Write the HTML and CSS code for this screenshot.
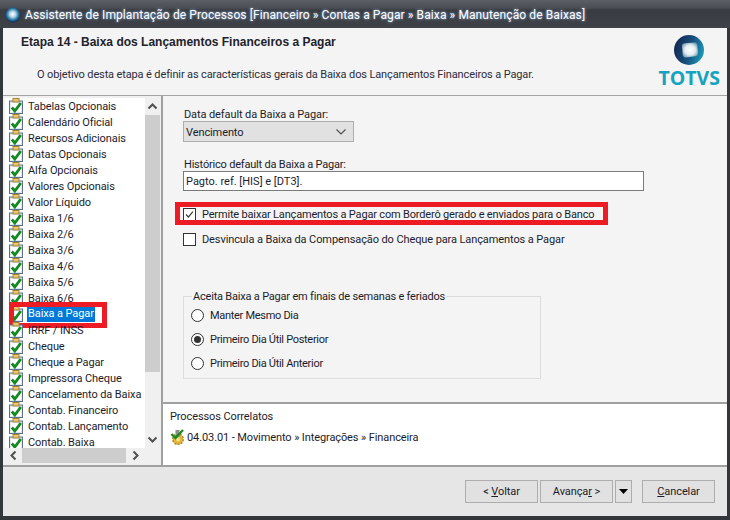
FILE: index.html
```html
<!DOCTYPE html>
<html lang="pt">
<head>
<meta charset="utf-8">
<title>Assistente de Implantação de Processos</title>
<link rel="stylesheet" href="styles.css">
</head>
<body>
<svg class="defs" width="0" height="0">
  <defs>
    <symbol id="ck" viewBox="0 0 16 16">
      <rect x="1.5" y="3" width="13" height="12.5" fill="#dfeaf5" stroke="#5b6f8a"/>
      <rect x="3" y="5" width="10" height="9" fill="#fff"/>
      <rect x="5" y="0.5" width="6" height="3.5" fill="#e9c46a" stroke="#a5853a"/>
      <path d="M3.8 9.5 L6.8 13 L12.8 5" fill="none" stroke="#118a1e" stroke-width="2.8"/>
    </symbol>
    <radialGradient id="ball" cx="0.48" cy="0.45" r="0.55">
      <stop offset="0" stop-color="#ffffff"/>
      <stop offset="0.35" stop-color="#b5d6e6"/>
      <stop offset="0.7" stop-color="#2a78a5"/>
      <stop offset="1" stop-color="#10244f"/>
    </radialGradient>
    <radialGradient id="glow" cx="0.5" cy="0.5" r="0.55">
      <stop offset="0" stop-color="#ffffff"/>
      <stop offset="0.6" stop-color="#e4edf2"/>
      <stop offset="1" stop-color="#7fa5bb"/>
    </radialGradient>
    <linearGradient id="orb" x1="0" y1="0.3" x2="1" y2="0.6">
      <stop offset="0" stop-color="#12284f"/>
      <stop offset="0.55" stop-color="#18507f"/>
      <stop offset="1" stop-color="#1b9cb8"/>
    </linearGradient>
  </defs>
</svg>
<div class="window">
  <div class="titlebar">
    <svg class="appicon" width="16" height="16" viewBox="0 0 16 16"><circle cx="8" cy="8" r="7.5" fill="url(#ball)"/></svg>
    <span class="titletext">Assistente de Implantação de Processos [Financeiro » Contas a Pagar » Baixa » Manutenção de Baixas]</span>
  </div>
  <div class="client">
    <header class="head">
      <div class="headtext">
        <h1 class="step">Etapa 14 - Baixa dos Lançamentos Financeiros a Pagar</h1>
        <p class="goal">O objetivo desta etapa é definir as características gerais da Baixa dos Lançamentos Financeiros a Pagar.</p>
      </div>
      <div class="logo">
        <svg width="30" height="30" viewBox="0 0 30 30">
          <circle cx="15" cy="15" r="15" fill="url(#orb)"/>
          <path d="M8 11 Q8 8.5 11 8.3 L20 7.6 Q23 7.5 23.3 10.5 L24 18 Q24 21 21 21.3 L12 22.4 Q9 22.6 8.7 19.6 Z" fill="url(#glow)"/>
        </svg>
        <span class="logotext">TOTVS</span>
      </div>
    </header>
    <div class="middle">
      <aside class="side">
        <div class="sidetop">
          <ul class="tree">
            <li class="row"><svg class="ic"><use href="#ck"/></svg><span>Tabelas Opcionais</span></li>
            <li class="row"><svg class="ic"><use href="#ck"/></svg><span>Calendário Oficial</span></li>
            <li class="row"><svg class="ic"><use href="#ck"/></svg><span>Recursos Adicionais</span></li>
            <li class="row"><svg class="ic"><use href="#ck"/></svg><span>Datas Opcionais</span></li>
            <li class="row"><svg class="ic"><use href="#ck"/></svg><span>Alfa Opcionais</span></li>
            <li class="row"><svg class="ic"><use href="#ck"/></svg><span>Valores Opcionais</span></li>
            <li class="row"><svg class="ic"><use href="#ck"/></svg><span>Valor Líquido</span></li>
            <li class="row"><svg class="ic"><use href="#ck"/></svg><span>Baixa 1/6</span></li>
            <li class="row"><svg class="ic"><use href="#ck"/></svg><span>Baixa 2/6</span></li>
            <li class="row"><svg class="ic"><use href="#ck"/></svg><span>Baixa 3/6</span></li>
            <li class="row"><svg class="ic"><use href="#ck"/></svg><span>Baixa 4/6</span></li>
            <li class="row"><svg class="ic"><use href="#ck"/></svg><span>Baixa 5/6</span></li>
            <li class="row"><svg class="ic"><use href="#ck"/></svg><span>Baixa 6/6</span></li>
            <li class="row current"><svg class="ic"><use href="#ck"/></svg><span class="sel">Baixa a Pagar</span><i class="mark mark-row"></i></li>
            <li class="row"><svg class="ic"><use href="#ck"/></svg><span>IRRF / INSS</span></li>
            <li class="row"><svg class="ic"><use href="#ck"/></svg><span>Cheque</span></li>
            <li class="row"><svg class="ic"><use href="#ck"/></svg><span>Cheque a Pagar</span></li>
            <li class="row"><svg class="ic"><use href="#ck"/></svg><span>Impressora Cheque</span></li>
            <li class="row"><svg class="ic"><use href="#ck"/></svg><span>Cancelamento da Baixa</span></li>
            <li class="row"><svg class="ic"><use href="#ck"/></svg><span>Contab. Financeiro</span></li>
            <li class="row"><svg class="ic"><use href="#ck"/></svg><span>Contab. Lançamento</span></li>
            <li class="row"><svg class="ic"><use href="#ck"/></svg><span>Contab. Baixa</span></li>
          </ul>
          <div class="vbar">
            <svg class="arrow" width="15" height="17" viewBox="0 0 15 17"><path d="M3.5 10.5 L7.5 6.5 L11.5 10.5" fill="none" stroke="#505050" stroke-width="2"/></svg>
            <div class="vthumb"></div>
            <svg class="arrow" width="15" height="17" viewBox="0 0 15 17"><path d="M3.5 6.5 L7.5 10.5 L11.5 6.5" fill="none" stroke="#505050" stroke-width="2"/></svg>
          </div>
        </div>
        <div class="hbar">
          <svg class="arrow" width="17" height="15" viewBox="0 0 17 15"><path d="M10.5 3.5 L6.5 7.5 L10.5 11.5" fill="none" stroke="#505050" stroke-width="2"/></svg>
          <div class="hthumb"></div>
          <svg class="arrow" width="17" height="15" viewBox="0 0 17 15"><path d="M6.5 3.5 L10.5 7.5 L6.5 11.5" fill="none" stroke="#505050" stroke-width="2"/></svg>
        </div>
      </aside>
      <main class="pane">
        <div class="form">
          <label class="lbl">Data default da Baixa a Pagar:</label>
          <div class="combo"><span class="combotext">Vencimento</span>
            <svg width="12" height="8" viewBox="0 0 12 8"><path d="M1.5 1.5 L6 6 L10.5 1.5" fill="none" stroke="#505050" stroke-width="1.2"/></svg>
          </div>
          <label class="lbl lbl-second">Histórico default da Baixa a Pagar:</label>
          <div class="input">Pagto. ref. [HIS] e [DT3].</div>
          <div class="check check-first">
            <span class="box"><svg width="13" height="13" viewBox="0 0 13 13"><path d="M2.5 6.5 L5.2 9.5 L10.5 3" fill="none" stroke="#333" stroke-width="1.4"/></svg></span>
            <span>Permite baixar Lançamentos a Pagar com Borderô gerado e enviados para o Banco</span>
            <i class="mark mark-check"></i>
          </div>
          <div class="check check-second">
            <span class="box"></span>
            <span>Desvincula a Baixa da Compensação do Cheque para Lançamentos a Pagar</span>
          </div>
          <fieldset class="group">
            <legend class="legend">Aceita Baixa a Pagar em finais de semanas e feriados</legend>
            <div class="radio"><span class="dot"></span><span>Manter Mesmo Dia</span></div>
            <div class="radio"><span class="dot on"></span><span>Primeiro Dia Útil Posterior</span></div>
            <div class="radio"><span class="dot"></span><span>Primeiro Dia Útil Anterior</span></div>
          </fieldset>
        </div>
        <section class="related">
          <div class="reltitle">Processos Correlatos</div>
          <div class="relrow">
            <svg width="16" height="16" viewBox="0 0 16 16">
              <circle cx="8" cy="10.2" r="5.2" fill="#e2b93b" stroke="#b08a1f" stroke-width="1.6" stroke-dasharray="2 1.2"/>
              <circle cx="8" cy="10.2" r="2" fill="#f6e08a"/>
              <rect x="5.5" y="1" width="4" height="7" fill="#8e8e8e"/>
              <path d="M1.5 5 L5.5 9 L13 1" fill="none" stroke="#1a8a22" stroke-width="2.4"/>
            </svg>
            <span>04.03.01 - Movimento » Integrações » Financeira</span>
          </div>
        </section>
      </main>
    </div>
    <footer class="foot">
      <button class="btn"><span>&lt; <u>V</u>oltar</span></button>
      <button class="btn"><span>Avança<u>r</u> &gt;</span></button>
      <button class="btn btn-drop"><svg width="9" height="5" viewBox="0 0 9 5"><path d="M0 0 H9 L4.5 5 Z" fill="#000"/></svg></button>
      <button class="btn btn-cancel"><span><u>C</u>ancelar</span></button>
    </footer>
  </div>
</div>
</body>
</html>
```
FILE: styles.css
```css
* { box-sizing: border-box; }
html, body { margin: 0; padding: 0; }
body {
  width: 730px;
  height: 520px;
  overflow: hidden;
  font-family: Roboto, "Liberation Sans", Arial, sans-serif;
  font-size: 11px;
  letter-spacing: -0.1px;
  color: #1c1c2a;
}
.defs { position: absolute; }
.window {
  width: 730px;
  height: 520px;
  background: #33363b;
  padding: 0 3px 4px 3px;
  display: flex;
  flex-direction: column;
}
.titlebar {
  height: 28px;
  margin: 0 -3px;
  padding: 2px 0 0 5px;
  display: flex;
  align-items: center;
  gap: 4px;
  background: linear-gradient(#5c5f66 0, #4a4d53 8px, #383b40 10px, #3f4248 28px);
}
.appicon { flex: none; }
.titletext {
  color: #fff;
  font-size: 12px;
  letter-spacing: 0.1px;
  white-space: nowrap;
  text-shadow: 0 0 3px #9fc4ff;
}
.client {
  flex: 1;
  display: flex;
  flex-direction: column;
  background: #f4f4f4;
  min-height: 0;
}
.head {
  height: 68px;
  flex: none;
  display: flex;
  justify-content: space-between;
  border-bottom: 1px solid #a3a3a3;
  padding: 0 7px 0 18px;
  background: #f4f4f4;
}
.step {
  margin: 7px 0 0;
  font-family: "Liberation Sans", Arial, sans-serif;
  font-size: 12px;
  font-weight: bold;
  letter-spacing: 0;
  color: #22222a;
}
.goal {
  margin: 19px 0 0 16px;
  font-size: 11px;
  letter-spacing: -0.13px;
  color: #2c2c3a;
}
.logo {
  display: flex;
  flex-direction: column;
  align-items: center;
  padding-top: 7px;
}
.logotext {
  font-family: "Open Sans", sans-serif;
  font-weight: 700;
  font-size: 19.5px;
  letter-spacing: 0;
  line-height: 20px;
  color: #17a2bd;
  margin-top: 3px;
}
.middle {
  flex: 1;
  display: flex;
  min-height: 0;
}
.side {
  width: 160px;
  flex: none;
  padding: 2px 0 2px 2px;
  display: flex;
  flex-direction: column;
  border-right: 2px solid #a0a0a0;
  border-bottom: 2px solid #a0a0a0;
  background: #f0f0f0;
}
.sidetop {
  flex: 1;
  display: flex;
  min-height: 0;
}
.tree {
  list-style: none;
  margin: 0;
  padding: 0 0 0 3px;
  width: 140px;
  background: #fff;
  overflow: hidden;
}
.row {
  position: relative;
  height: 16px;
  display: flex;
  align-items: center;
  white-space: nowrap;
}
.row span { margin-left: 3px; padding: 0 1px; }
.ic { width: 16px; height: 16px; flex: none; }
.sel {
  background: #0078d7;
  color: #fff;
  height: 16px;
  line-height: 16px;
}
.vbar {
  width: 15px;
  flex: none;
  display: flex;
  flex-direction: column;
  background: #f0f0f0;
}
.arrow { flex: none; display: block; }
.vthumb {
  flex: 1;
  background: #cdcdcd;
  margin-bottom: 59px;
}
.hbar {
  height: 15px;
  flex: none;
  display: flex;
  background: #f0f0f0;
}
.hthumb {
  width: 104px;
  background: #cdcdcd;
  margin-right: 1px;
}
.pane {
  flex: 1;
  display: flex;
  flex-direction: column;
  min-width: 0;
}
.form {
  flex: 1;
  padding: 11px 0 0 20px;
  position: relative;
  min-height: 0;
}
.lbl { display: block; height: 14px; line-height: 16px; margin-left: 1px; }
.lbl-second { margin-top: 15px; letter-spacing: -0.2px; }
.combo {
  width: 171px;
  height: 21px;
  margin-top: 0;
  background: #e1e1e1;
  border: 1px solid #adadad;
  display: flex;
  align-items: center;
  justify-content: space-between;
  padding: 0 6px 0 2px;
}
.combotext { padding-top: 1px; }
.input {
  width: 461px;
  height: 20px;
  margin-top: 0;
  background: #fff;
  border: 1px solid #7a7a7a;
  line-height: 19px;
  letter-spacing: 0;
  padding-left: 2px;
}
.check {
  position: relative;
  display: flex;
  align-items: center;
  gap: 6px;
  height: 14px;
}
.check-first { margin-top: 16px; letter-spacing: -0.17px; }
.check-second { margin-top: 11px; }
.box {
  width: 13px;
  height: 13px;
  flex: none;
  background: #fff;
  border: 1px solid #333;
  display: flex;
  align-items: center;
  justify-content: center;
}
.group {
  width: 358px;
  height: 89px;
  margin: 44px 0 0;
  border: 1px solid #dcdcdc;
  padding: 0 0 0 7px;
}
.legend { padding: 0 1px; margin-left: 1px; line-height: 13px; letter-spacing: -0.2px; }
.radio {
  display: flex;
  align-items: center;
  gap: 6px;
  height: 24px;
  letter-spacing: -0.3px;
}
.dot {
  width: 13px;
  height: 13px;
  flex: none;
  border: 1px solid #333;
  border-radius: 50%;
  background: #fff;
  display: flex;
  align-items: center;
  justify-content: center;
}
.dot.on::after {
  content: "";
  width: 7px;
  height: 7px;
  border-radius: 50%;
  background: #333;
}
.related {
  height: 65px;
  flex: none;
  background: #fff;
  border-top: 2px solid #a0a0a0;
  border-bottom: 2px solid #a0a0a0;
  padding: 6px 0 0 7px;
}
.reltitle { height: 14px; line-height: 14px; }
.relrow {
  display: flex;
  align-items: center;
  gap: 1px;
  margin-top: 5px;
  height: 16px;
}
.foot {
  flex: none;
  height: 49px;
  background: #e6e6e6;
  display: flex;
  align-items: flex-start;
  padding: 13px 0 0 462px;
  gap: 2px;
}
.btn {
  width: 73px;
  height: 23px;
  padding: 0;
  background: #e1e1e1;
  border: 1px solid #adadad;
  font: inherit;
  letter-spacing: inherit;
  color: inherit;
  display: flex;
  align-items: center;
  justify-content: center;
}
.btn-drop { width: 17px; }
.btn-cancel { margin-left: 8px; }
.mark {
  position: absolute;
  border: 5px solid #ed1c24;
  pointer-events: none;
}
.mark-row { left: 1px; top: -4px; width: 98px; height: 26px; }
.mark-check { left: -8px; top: -5px; width: 433px; height: 23px; }
```
